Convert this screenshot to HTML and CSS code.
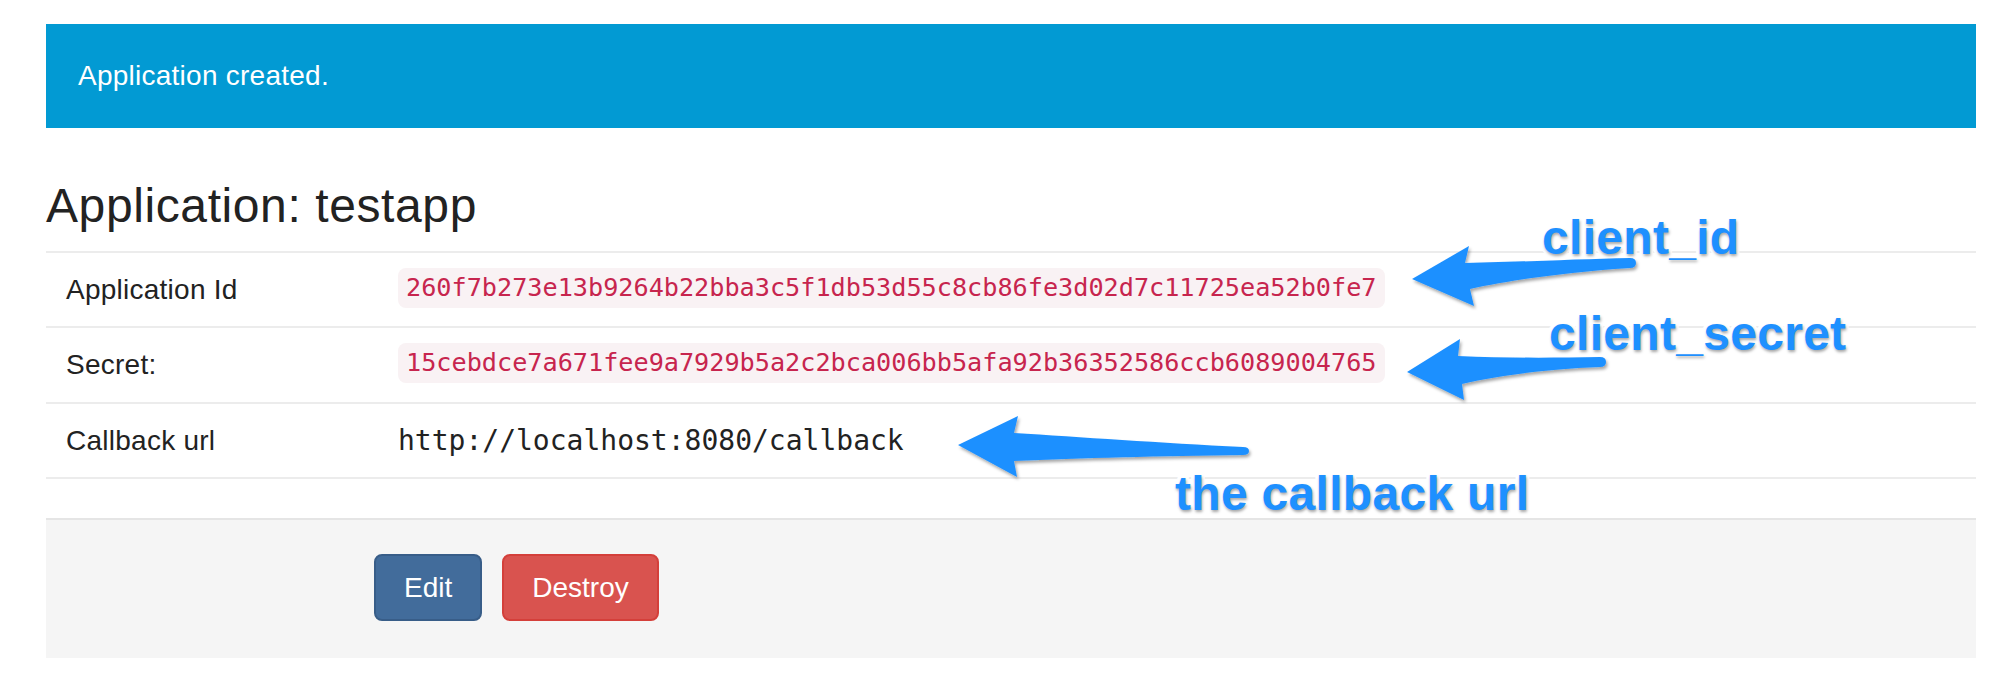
FILE: index.html
```html
<!DOCTYPE html>
<html lang="en">
<head>
<meta charset="utf-8">
<title>Application: testapp</title>
<link rel="stylesheet" href="styles.css">
</head>
<body>
<div class="page">
  <div class="alert">Application created.</div>
  <h3 class="title">Application: testapp</h3>
  <div class="details">
    <div class="row">
      <div class="label">Application Id</div>
      <div class="value"><code class="token">260f7b273e13b9264b22bba3c5f1db53d55c8cb86fe3d02d7c11725ea52b0fe7</code></div>
    </div>
    <div class="row">
      <div class="label">Secret:</div>
      <div class="value"><code class="token">15cebdce7a671fee9a7929b5a2c2bca006bb5afa92b36352586ccb6089004765</code></div>
    </div>
    <div class="row">
      <div class="label">Callback url</div>
      <div class="value"><span class="url">http://localhost:8080/callback</span></div>
    </div>
  </div>
  <div class="actions">
    <a class="btn btn-edit" href="#">Edit</a>
    <a class="btn btn-destroy" href="#">Destroy</a>
  </div>
</div>

<div class="annotations">
  <svg class="arrows" width="2000" height="678" viewBox="0 0 2000 678" xmlns="http://www.w3.org/2000/svg">
    <defs>
      <filter id="shadow" x="-10%" y="-30%" width="120%" height="160%">
        <feDropShadow dx="1.5" dy="2.5" stdDeviation="1.8" flood-color="#000" flood-opacity="0.35"/>
      </filter>
    </defs>
    <g fill="#1e90ff" filter="url(#shadow)">
      <path d="M1412,279 L1469,246 L1465,263 C1520,262 1580,259 1630,258 Q1636,258 1636,263 Q1636,268 1630,268 C1570,272 1510,280 1470,289 L1474,306 Z"/>
      <path d="M1407,372 L1460,339 L1458,356 C1500,358 1550,358 1600,357 Q1606,357 1606,362 Q1606,367 1600,367 C1550,369 1500,375 1462,384 L1464,400 Z"/>
      <path d="M958,445 L1018,416 L1014,433 C1080,437 1160,443 1243,447 Q1249,447 1249,451 Q1249,455 1243,455 C1160,456 1080,458 1014,461 L1017,477 Z"/>
    </g>
  </svg>
  <span class="note note-id">client_id</span>
  <span class="note note-secret">client_secret</span>
  <span class="note note-callback">the callback url</span>
</div>
</body>
</html>
```

FILE: styles.css
```css
html, body {
  margin: 0;
  padding: 0;
  background: #ffffff;
}

body {
  position: relative;
  width: 2000px;
  height: 678px;
  overflow: hidden;
  font-family: "Liberation Sans", Arial, Helvetica, sans-serif;
  color: #222222;
}

.page {
  width: 1930px;
  margin-left: 46px;
  padding-top: 24px;
}

.alert {
  height: 104px;
  box-sizing: border-box;
  padding: 0 32px;
  background: #029ad3;
  color: #ffffff;
  font-size: 28px;
  letter-spacing: 0.25px;
  line-height: 104px;
  margin-bottom: 52px;
}

.title {
  margin: 0 0 18px 0;
  font-size: 48px;
  font-weight: normal;
  letter-spacing: 0.6px;
  line-height: 1.1;
  color: #222222;
}

.details {
  border-bottom: 2px solid #ececec;
}

.row {
  display: grid;
  grid-template-columns: 336px 1fr;
  align-items: center;
  height: 75.5px;
  box-sizing: border-box;
  border-top: 2px solid #ececec;
  font-size: 28px;
  line-height: 40px;
}

.label {
  padding-left: 20px;
  letter-spacing: 0.25px;
}

.value {
  padding-left: 16px;
  display: flex;
  align-items: center;
}

.token {
  display: inline-block;
  height: 40px;
  box-sizing: border-box;
  padding: 5px 8px;
  margin-top: -4px;
  border-radius: 8px;
  background: #f9f2f4;
  color: #c7254e;
  font-family: "DejaVu Sans Mono", "Liberation Mono", monospace;
  font-size: 25.2px;
  line-height: 30px;
}

.url {
  font-family: "DejaVu Sans Mono", "Liberation Mono", monospace;
  font-size: 28px;
  color: #222222;
}

.actions {
  margin-top: 39px;
  border-top: 2px solid #e5e5e5;
  background: #f5f5f5;
  padding: 34px 0 37px 328px;
  display: flex;
  gap: 20px;
}

.btn {
  display: inline-block;
  height: 67px;
  box-sizing: border-box;
  padding: 0 28px;
  border: 2px solid transparent;
  border-radius: 8px;
  color: #ffffff;
  text-decoration: none;
  font-size: 28px;
  line-height: 63px;
}

.btn-edit {
  background: #426c9b;
  border-color: #385d88;
}

.btn-destroy {
  background: #d9534f;
  border-color: #d43f3a;
}

.annotations {
  position: absolute;
  left: 0;
  top: 0;
  width: 2000px;
  height: 678px;
  pointer-events: none;
}

.arrows {
  position: absolute;
  left: 0;
  top: 0;
}

.note {
  position: absolute;
  font-family: "Liberation Sans", Arial, Helvetica, sans-serif;
  font-weight: bold;
  font-size: 48px;
  line-height: 48px;
  letter-spacing: 0.3px;
  color: #1e90ff;
  white-space: nowrap;
  -webkit-text-stroke: 7px #ffffff;
  paint-order: stroke fill;
  text-shadow: 1px 2px 3px rgba(0, 0, 0, 0.35);
}

.note-id {
  left: 1542px;
  top: 214px;
}

.note-secret {
  left: 1549px;
  top: 310px;
}

.note-callback {
  left: 1175px;
  top: 470px;
}
```
